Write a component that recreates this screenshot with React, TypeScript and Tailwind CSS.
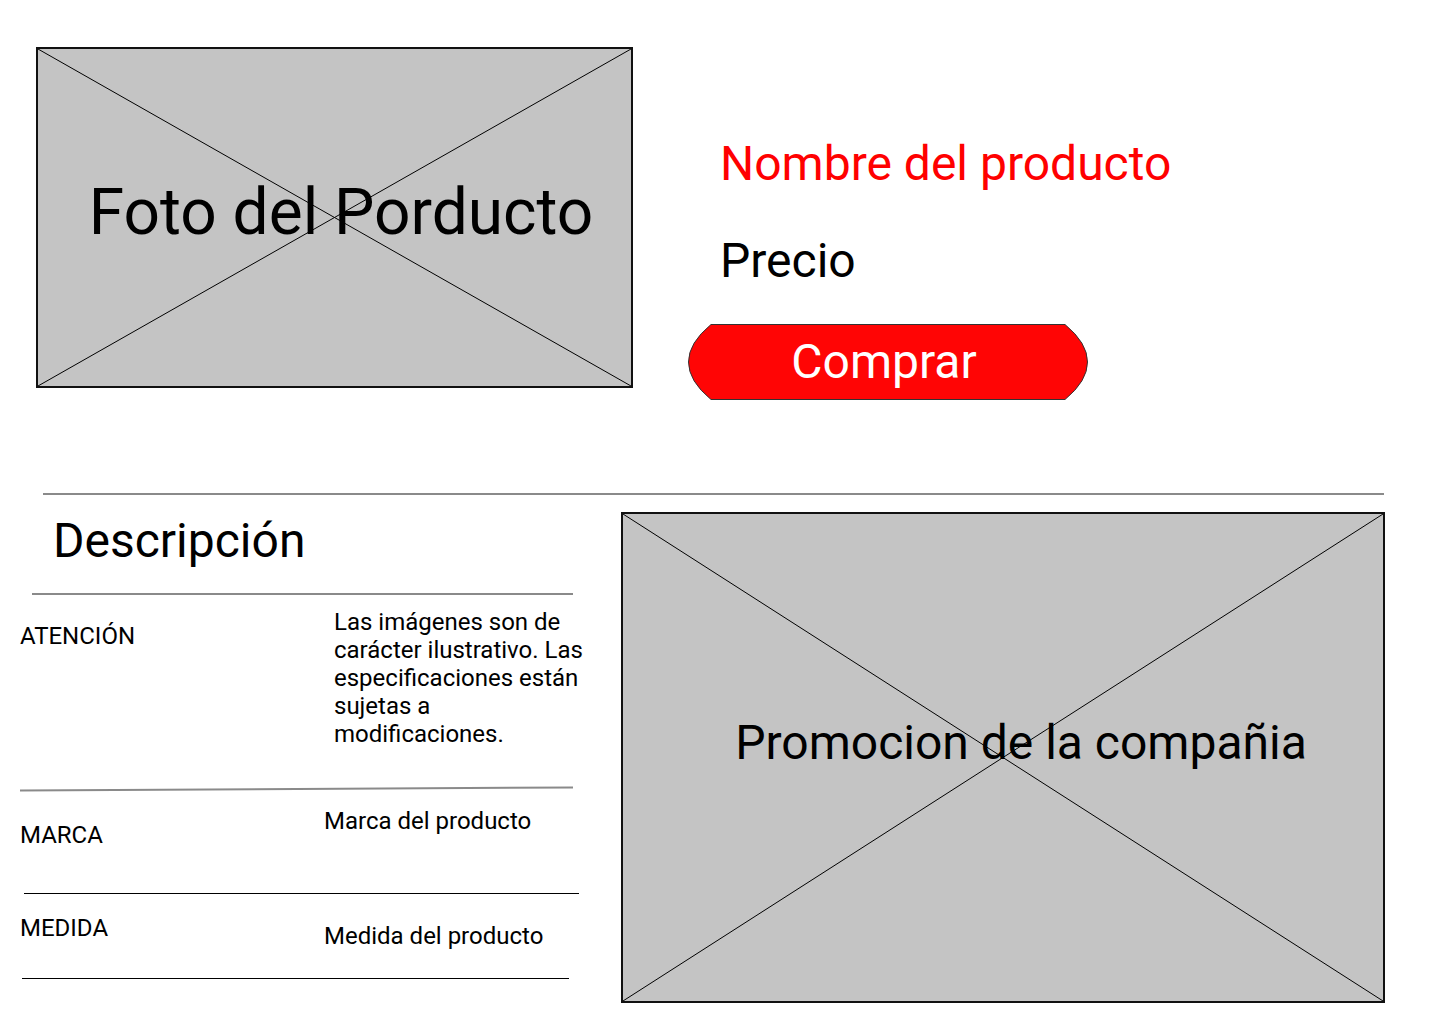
import React from "react";

function Cross() {
  return (
    <svg
      className="absolute inset-0 h-full w-full"
      viewBox="0 0 100 100"
      preserveAspectRatio="none"
    >
      <line x1="0" y1="0" x2="100" y2="100" stroke="#000" strokeWidth="1" vectorEffect="non-scaling-stroke" />
      <line x1="100" y1="0" x2="0" y2="100" stroke="#000" strokeWidth="1" vectorEffect="non-scaling-stroke" />
    </svg>
  );
}

function BuyButton() {
  return (
    <div className="relative flex h-[76px] w-[400px] items-center justify-center">
      <svg className="absolute inset-0 h-full w-full" viewBox="0 0 400 76">
        <path
          d="M23 0.5 L377 0.5 Q399.5 19 399.5 38 Q399.5 57 377 75.5 L23 75.5 Q0.5 57 0.5 38 Q0.5 19 23 0.5 Z"
          fill="#ff0505"
          stroke="#333"
          strokeWidth="1"
        />
      </svg>
      <span className="relative pr-[8px] text-[48px] leading-none text-white">Comprar</span>
    </div>
  );
}

export default function App() {
  return (
    <div className="h-[1024px] w-[1440px] overflow-hidden bg-white font-['Roboto',_sans-serif] text-black">
      {/* Top section */}
      <div className="flex items-start pt-[47px]">
        <div className="relative ml-[36px] flex h-[341px] w-[597px] shrink-0 items-center justify-center border-2 border-[#111] bg-[#c4c4c4]">
          <Cross />
          <span className="relative pb-[10px] pl-[13px] text-[64px] leading-none whitespace-nowrap">
            Foto del Porducto
          </span>
        </div>
        <div className="ml-[55px] flex flex-col">
          <div className="mt-[93px] pl-[32px] text-[48px] leading-none whitespace-nowrap text-[#ff0000]">
            Nombre del producto
          </div>
          <div className="mt-[49px] pl-[32px] text-[48px] leading-none">Precio</div>
          <div className="mt-[39px]">
            <BuyButton />
          </div>
        </div>
      </div>

      {/* Divider */}
      <div className="ml-[43px] mt-[93px] h-[2px] w-[1341px] bg-[#8a8a8a]" />

      {/* Bottom section */}
      <div className="flex items-start">
        <div className="flex w-[621px] shrink-0 flex-col">
          <div className="ml-[53px] mt-[22px] text-[48px] leading-none">Descripción</div>
          <div className="ml-[32px] mt-[28px] h-[2px] w-[541px] bg-[#8a8a8a]" />

          <div className="flex h-[193px] text-[24px] leading-[28px]">
            <div className="w-[334px] shrink-0 pl-[20px] pt-[27px]">ATENCIÓN</div>
            <div className="pt-[13px] whitespace-nowrap">
              Las imágenes son de
              <br />
              carácter ilustrativo. Las
              <br />
              especificaciones están
              <br />
              sujetas a
              <br />
              modificaciones.
            </div>
          </div>
          <div className="ml-[20px] h-[2px] w-[553px] -rotate-[0.31deg] bg-[#8a8a8a]" />

          <div className="flex h-[103px] text-[24px] leading-[28px]">
            <div className="w-[324px] shrink-0 pl-[20px] pt-[31px]">MARCA</div>
            <div className="pt-[17px] whitespace-nowrap">Marca del producto</div>
          </div>
          <div className="ml-[24px] h-px w-[555px] bg-black" />

          <div className="flex h-[84px] text-[24px] leading-[28px]">
            <div className="w-[324px] shrink-0 pl-[20px] pt-[20px]">MEDIDA</div>
            <div className="pt-[28px] whitespace-nowrap">Medida del producto</div>
          </div>
          <div className="ml-[22px] h-px w-[547px] bg-black" />
        </div>

        <div className="relative mt-[17px] flex h-[491px] w-[764px] shrink-0 items-center justify-center border-2 border-[#111] bg-[#c4c4c4]">
          <Cross />
          <span className="relative pb-[30px] pl-[36px] text-[48px] leading-none whitespace-nowrap">
            Promocion de la compañia
          </span>
        </div>
      </div>
    </div>
  );
}
